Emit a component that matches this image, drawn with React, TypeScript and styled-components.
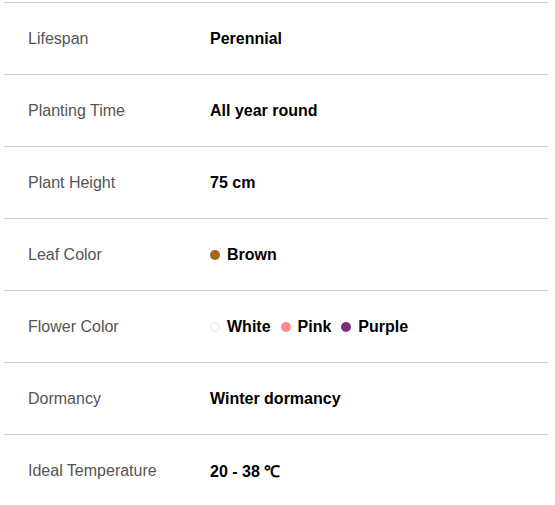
import React from "react";
import styled, { createGlobalStyle } from "styled-components";

const Global = createGlobalStyle`
  body {
    margin: 0;
    background: #fff;
    font-family: "Liberation Sans", Arial, sans-serif;
  }
`;

const Table = styled.div`
  width: 544px;
  margin: 2px 0 0 4px;
`;

const Row = styled.div`
  display: grid;
  grid-template-columns: 182px 1fr;
  align-items: center;
  height: 71px;
  padding: 0 24px;
  border-top: 1px solid #cccccc;
`;

const Label = styled.div`
  font-size: 16px;
  color: #555555;
`;

const Value = styled.div`
  display: flex;
  align-items: center;
  gap: 10px;
  font-size: 16px;
  font-weight: 700;
  color: #000;
`;

const Swatch = styled.span`
  display: flex;
  align-items: center;
  gap: 7px;
`;

const Dot = styled.span<{ $color: string }>`
  width: 10px;
  height: 10px;
  border-radius: 50%;
  box-sizing: border-box;
  background: ${(p) => p.$color};
  border: ${(p) => (p.$color === "#ffffff" ? "1px solid #e2e2e2" : "none")};
`;

type Color = { name: string; hex: string };

const rows: { label: string; value?: string; colors?: Color[] }[] = [
  { label: "Lifespan", value: "Perennial" },
  { label: "Planting Time", value: "All year round" },
  { label: "Plant Height", value: "75 cm" },
  { label: "Leaf Color", colors: [{ name: "Brown", hex: "#a5641f" }] },
  {
    label: "Flower Color",
    colors: [
      { name: "White", hex: "#ffffff" },
      { name: "Pink", hex: "#ff8a8e" },
      { name: "Purple", hex: "#7e2f7f" },
    ],
  },
  { label: "Dormancy", value: "Winter dormancy" },
  { label: "Ideal Temperature", value: "20 - 38 \u2103" },
];

const App = () => {
  return (
    <>
      <Global />
      <Table>
        {rows.map((r) => (
          <Row key={r.label}>
            <Label>{r.label}</Label>
            <Value>
              {r.colors
                ? r.colors.map((c) => (
                    <Swatch key={c.name}>
                      <Dot $color={c.hex} />
                      {c.name}
                    </Swatch>
                  ))
                : r.value}
            </Value>
          </Row>
        ))}
      </Table>
    </>
  );
};

export default App;
